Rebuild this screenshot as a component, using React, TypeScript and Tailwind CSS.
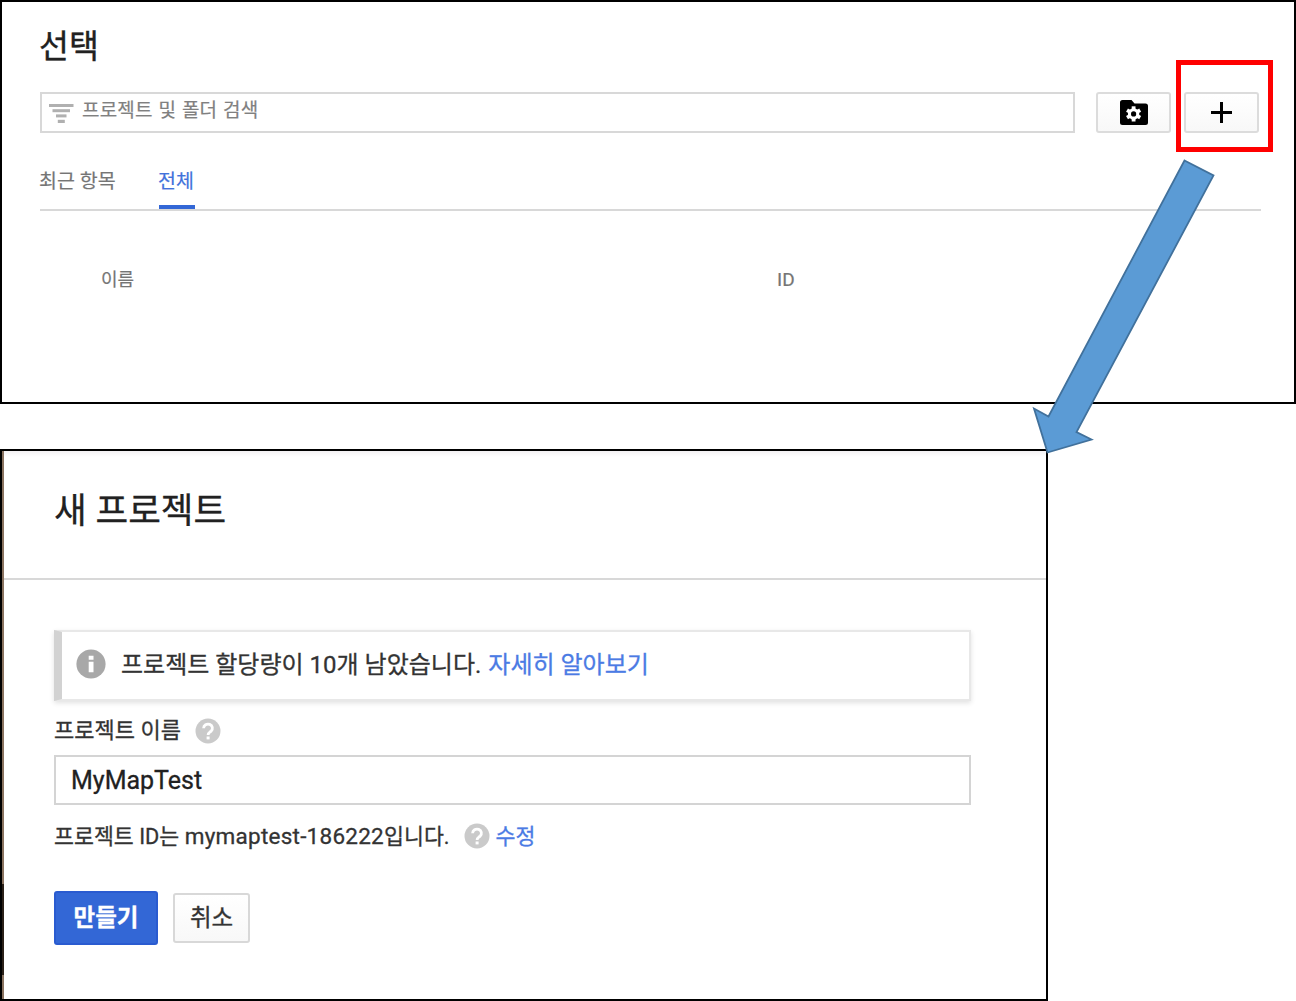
import React from "react";

function InfoIcon() {
  return (
    <svg width="30" height="30" viewBox="0 0 30 30" className="mb-[3px] ml-[2px] shrink-0">
      <circle cx="15" cy="15" r="14.6" fill="#a8a8a8" />
      <path d="M12.7 6.8h4.8v4h-4.8zM12.7 12.8h4.8v10.4h-4.8z" fill="#fff" />
    </svg>
  );
}

function HelpIcon() {
  return (
    <svg width="26" height="26" viewBox="0 0 26 26" className="ml-[14px] shrink-0">
      <circle cx="13" cy="13" r="12.5" fill="#cacaca" />
      <path d="M8.6 10.2a4.4 4.1 0 1 1 7.5 2.9c-1.6 1.4-3 1.9-3 4" fill="none" stroke="#fff" strokeWidth="2.8" />
      <rect x="11.6" y="18.5" width="3" height="2.9" fill="#fff" />
    </svg>
  );
}

function FilterIcon() {
  return (
    <svg width="25" height="20" viewBox="0 0 25 20" fill="#b0b0b0" className="mt-[2px] shrink-0">
      <rect x="0" y="0" width="24.5" height="3" />
      <rect x="3.5" y="5.2" width="17.5" height="3" />
      <rect x="7" y="10.4" width="10.5" height="3" />
      <rect x="8.8" y="15.8" width="7" height="3.2" />
    </svg>
  );
}

function FolderGearIcon() {
  return (
    <svg width="28" height="25" viewBox="0 0 28 25">
      <path d="M2.5 0H11.5L14.5 3.5H25.5Q28 3.5 28 6V22.5Q28 25 25.5 25H2.5Q0 25 0 22.5V2.5Q0 0 2.5 0Z" fill="#000" />
      <g transform="translate(13.6 13.9)" fill="#fff">
        <circle r="5.7" />
        {[0, 60, 120].map((a) => (
          <rect key={a} x="-1.9" y="-7.6" width="3.8" height="15.2" transform={`rotate(${a})`} />
        ))}
        <circle r="2.6" fill="#000" />
      </g>
    </svg>
  );
}

function PlusIcon() {
  return (
    <svg width="21" height="21" viewBox="0 0 21 21" fill="#000">
      <path d="M9 0h3v9h9v3h-9v9H9v-9H0V9h9z" />
    </svg>
  );
}

function SelectPanel() {
  return (
    <section className="h-[404px] w-[1296px] border-2 border-black bg-white pl-[38px]">
      <h1 className="-ml-px mt-[21px] h-[48px] text-[32.5px] leading-[48px] text-[#212121] [-webkit-text-stroke:0.4px]">선택</h1>
      <div className="mt-[21px] flex h-[41px]">
        <div className="flex w-[1035px] items-center border-2 border-[#d8d8d8] pl-[7px]">
          <FilterIcon />
          <span className="ml-[8px] pb-[4px] text-[19px] leading-[28px] tracking-[0.15px] text-[#808080] [-webkit-text-stroke:0.2px] [word-spacing:1px]">프로젝트 및 폴더 검색</span>
        </div>
        <button className="ml-[21px] flex w-[75px] items-center justify-center rounded-[3px] border-2 border-[#dcdcdc] bg-gradient-to-b from-white to-[#f8f8f8]">
          <FolderGearIcon />
        </button>
        <button className="ml-[13px] flex w-[75px] items-center justify-center rounded-[3px] border-2 border-[#dcdcdc] bg-gradient-to-b from-white to-[#f8f8f8]">
          <PlusIcon />
        </button>
      </div>
      <nav className="mt-[27px] flex h-[51px] w-[1221px] border-b-2 border-[#d8d8d8] text-[19.5px] leading-[44px] text-[#757575] [-webkit-text-stroke:0.2px]">
        <span className="-ml-px h-[49px] w-[120px]">최근 항목</span>
        <span className="h-[49px] w-[36px] border-b-4 border-[#3367d6] text-[#4272db]"><span className="-ml-px">전체</span></span>
      </nav>
      <div className="mt-[55px] flex pl-[61px] text-[18px] leading-[28px] text-[#757575] [-webkit-text-stroke:0.2px]">
        <span className="w-[676px]">이름</span>
        <span className="text-[19px]">ID</span>
      </div>
    </section>
  );
}

function NewProjectPanel() {
  return (
    <section className="mt-[45px] flex h-[552px] w-[1048px] border-2 border-black bg-white">
      <div className="flex w-[2px] flex-col bg-[#8a7360]">
        <div className="mt-[433px] h-[91px] bg-[#2a2018]" />
      </div>
      <div className="flex-1 [-webkit-text-stroke:0.3px]">
        <header className="h-[129px] border-b-2 border-[#d8d8d8] bg-[linear-gradient(#f3f1f3,#ffffff_6px)] pl-[50px] pt-[35px]">
          <h2 className="text-[35.5px] leading-[50px] text-[#212121]">새 프로젝트</h2>
        </header>
        <div className="pl-[50px] pt-[50px]">
          <div className="flex h-[71px] w-[917px] items-center border-y-2 border-r-2 border-l-8 border-[#e8e8e8] border-l-[#d2d2d2] pl-[12px] text-[24px] leading-[34px] shadow-[0_2px_5px_rgba(0,0,0,0.12)]">
            <InfoIcon />
            <span className="ml-[15px] pb-[1px] text-[#333]">프로젝트 할당량이 10개 남았습니다.</span>
            <span className="ml-[7px] pb-[1px] text-[#4b7be4]">자세히 알아보기</span>
          </div>
          <div className="mt-[13px] flex h-[34px] items-center text-[22px] leading-[34px] text-[#333]">
            <span>프로젝트 이름</span>
            <HelpIcon />
          </div>
          <div className="mt-[7px] h-[50px] w-[917px] border-2 border-[#d4d4d4] pl-[15px] text-[25px] leading-[48px] text-[#212121]">MyMapTest</div>
          <div className="mt-[14px] flex h-[34px] items-center text-[21.7px] leading-[34px] text-[#333]">
            <span>프로젝트 ID는 <span className="text-[22.5px] tracking-[0.25px]">mymaptest-186222</span>입니다.</span>
            <HelpIcon />
            <span className="ml-[6px] mt-[1px] text-[#4b7be4]">수정</span>
          </div>
          <div className="mt-[38px] flex items-center">
            <button className="h-[54px] w-[104px] rounded-[3px] border-2 border-[#2a5bd0] bg-[#3367d6] pb-[1px] text-[23.5px] font-bold leading-[46px] text-white">만들기</button>
            <button className="ml-[15px] h-[50px] w-[77px] rounded-[3px] border-2 border-[#d8d8d8] bg-gradient-to-b from-white to-[#f8f8f8] text-[23.5px] leading-[44px] text-[#333]">취소</button>
          </div>
        </div>
      </div>
    </section>
  );
}

export default function App() {
  return (
    <main className="relative h-[1001px] w-[1296px] overflow-hidden whitespace-nowrap bg-white font-[Roboto,'Noto_Sans_CJK_KR',sans-serif]">
      <SelectPanel />
      <NewProjectPanel />
      <div className="absolute left-[1176px] top-[60px] h-[92px] w-[97px] border-[5px] border-[#ff0000]" />
      <svg className="absolute left-[1024px] top-[150px]" width="200" height="312" viewBox="1024 150 200 312">
        <path d="M1184.5 160.5L1213.5 175.5L1076.5 432L1091.5 439.5L1047.5 452.5L1034 408.5L1048.5 416.5Z" fill="#5b9bd5" stroke="#41719c" strokeWidth="1.8" />
      </svg>
    </main>
  );
}
